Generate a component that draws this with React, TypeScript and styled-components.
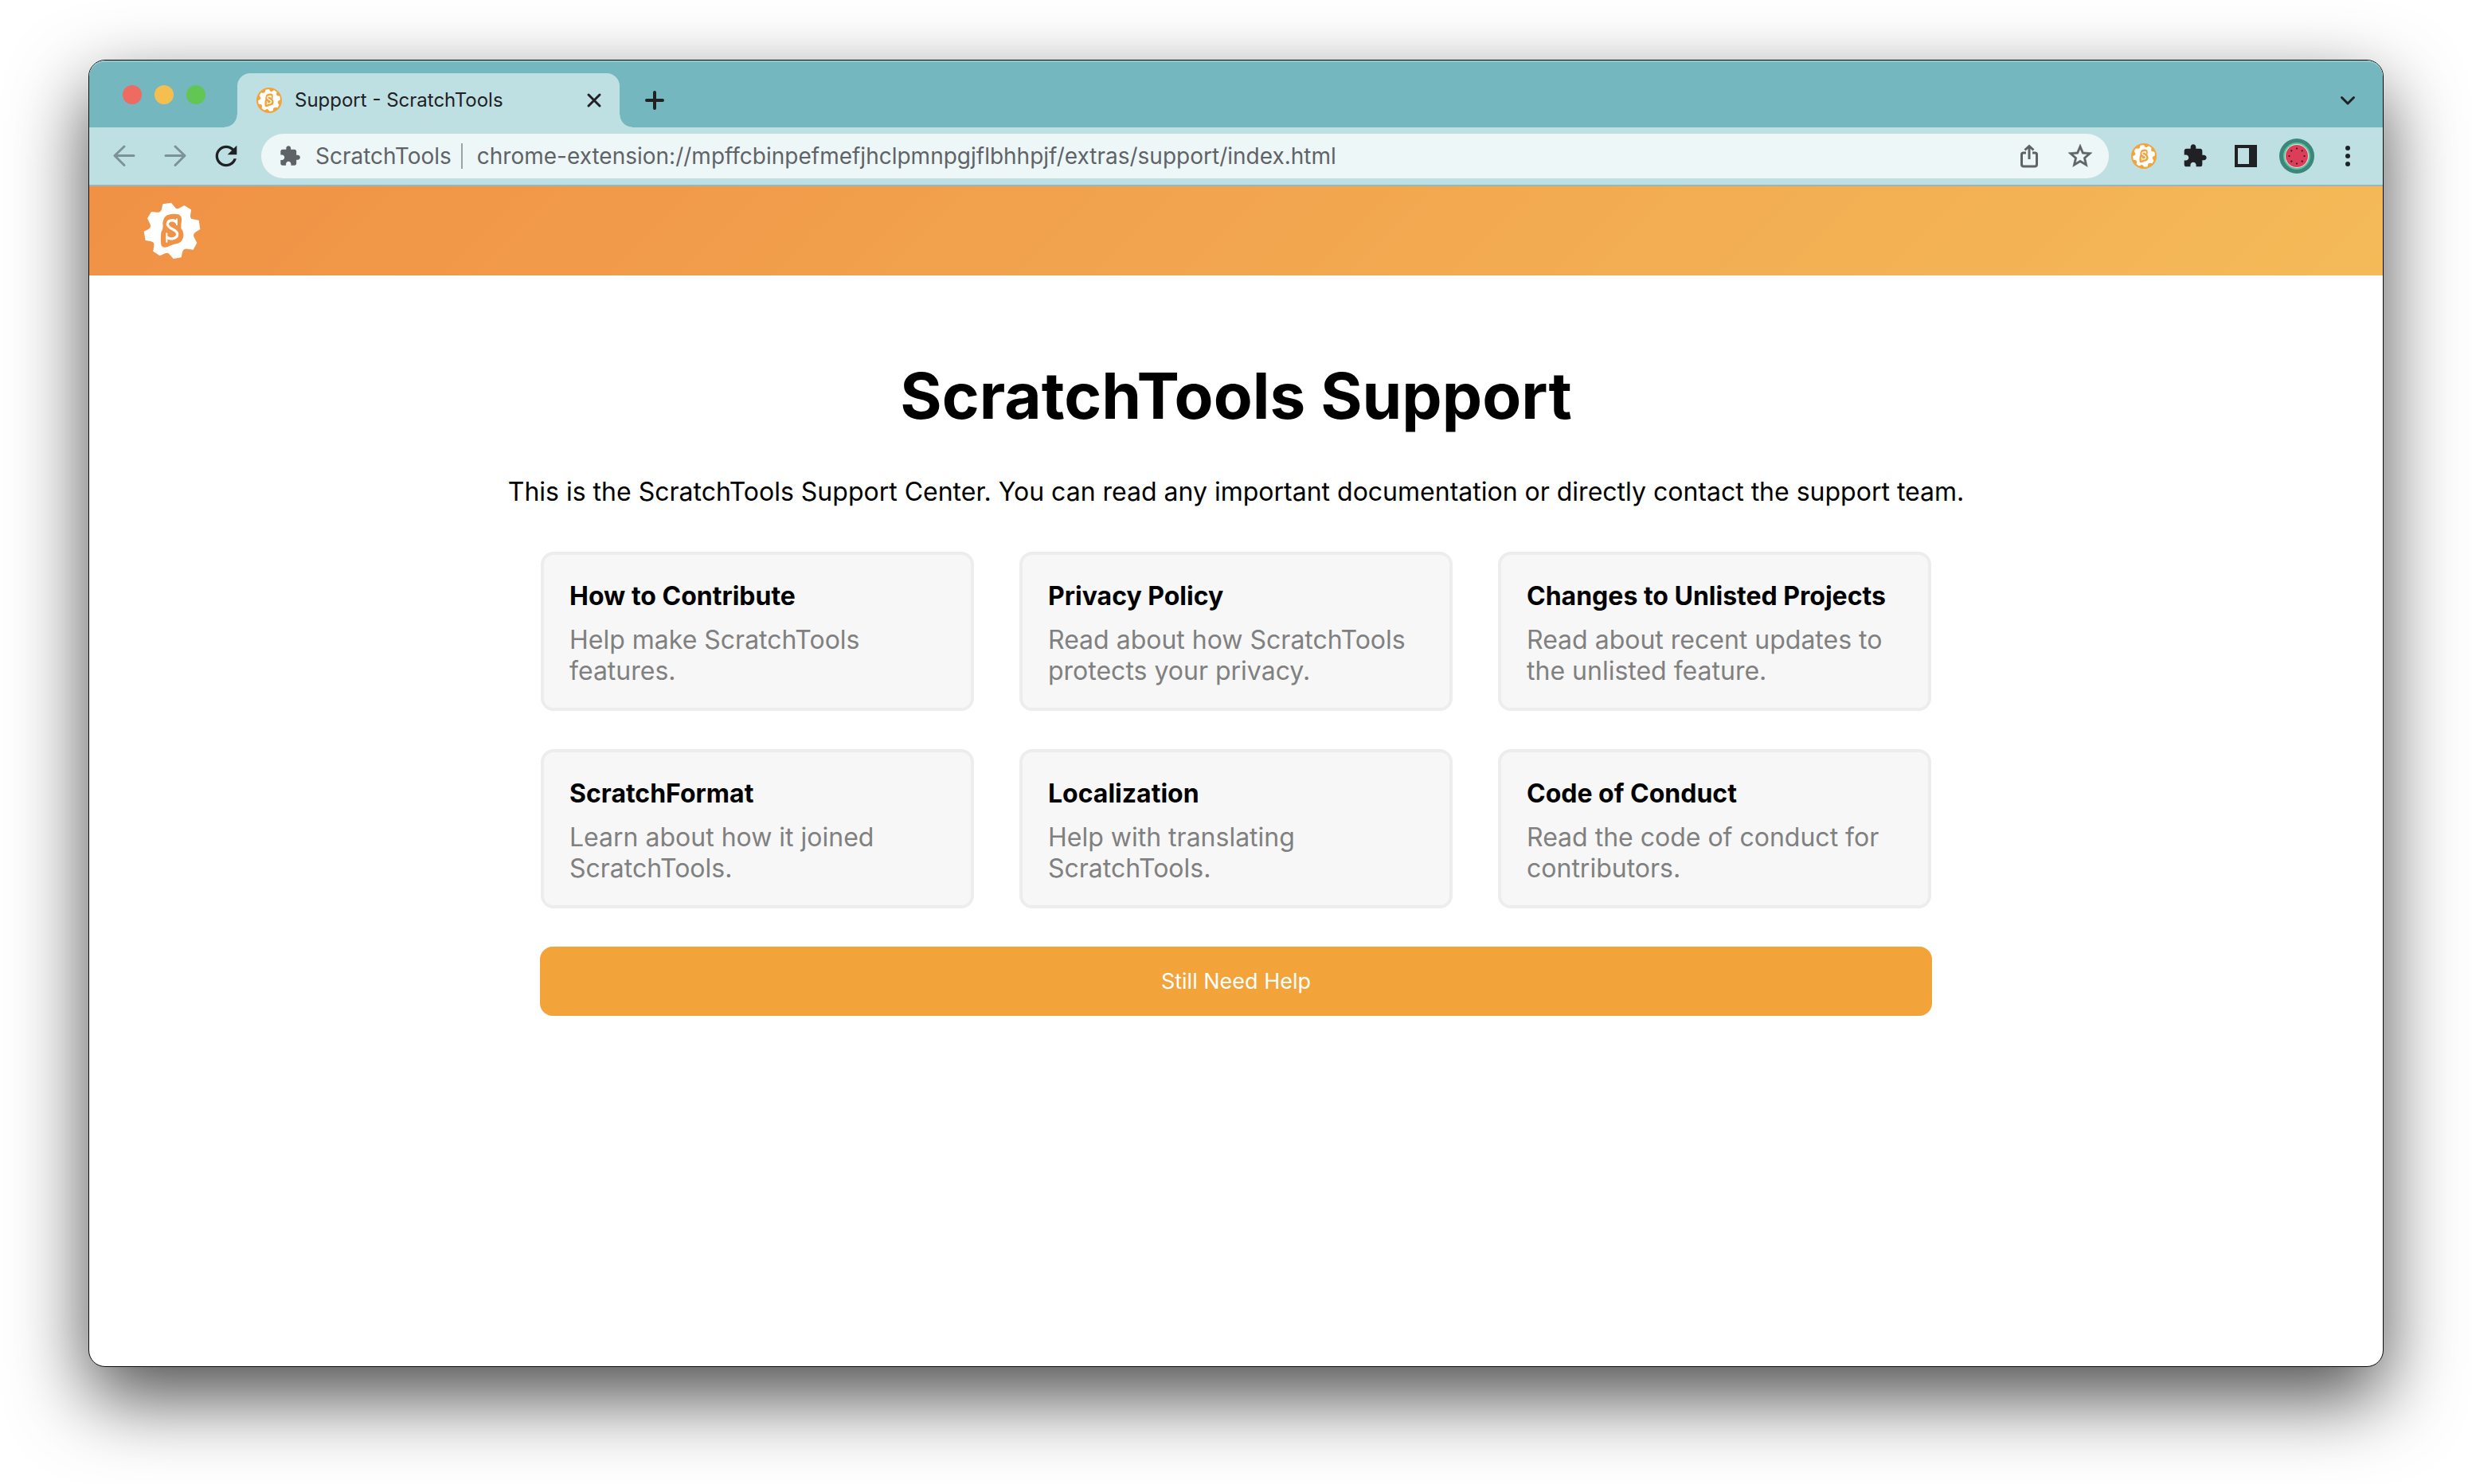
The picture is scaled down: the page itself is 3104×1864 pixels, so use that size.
import React from "react";
import styled, { createGlobalStyle } from "styled-components";

const INK = "#202124";
const MUTED = "#5f6368";
const TOOLBAR = "#bfe0e2";
const STRIP = "#74b7bf";
const ORANGE = "#f2a33a";

const GlobalStyle = createGlobalStyle`
  *, *::before, *::after { box-sizing: border-box; }
  body {
    margin: 0;
    background: #fff;
    color: #000;
    font-family: Inter, "Liberation Sans", sans-serif;
  }
  button, input { font: inherit; color: inherit; }
`;

const Desktop = styled.div`
  display: flex;
  min-height: 100vh;
  padding: 75px 111px 147px;
  overflow: hidden;
`;

const BrowserWindow = styled.div`
  flex: 1;
  min-width: 0;
  display: flex;
  flex-direction: column;
  border: 1px solid #0c0c0c;
  border-radius: 21px;
  background: #fff;
  box-shadow: 0 38px 96px rgba(0, 0, 0, 0.7);
`;

const TabStrip = styled.div`
  display: flex;
  align-items: center;
  height: 84px;
  padding: 0 28px 0 42px;
  border-top: 2px solid #8ec7cd;
  border-radius: 20px 20px 0 0;
  background: ${STRIP};
`;

const Lights = styled.div`
  display: flex;
  gap: 16px;
  margin-right: 40px;
`;

const Light = styled.button<{ $color: string }>`
  width: 24px;
  height: 24px;
  padding: 0;
  border: 0;
  border-radius: 50%;
  background: ${(p) => p.$color};
`;

const Tab = styled.div`
  position: relative;
  align-self: flex-end;
  display: flex;
  align-items: center;
  gap: 16px;
  width: 480px;
  height: 68px;
  padding: 0 20px 0 24px;
  border-radius: 16px 16px 0 0;
  background: ${TOOLBAR};
  color: ${INK};
  font-size: 24px;
  line-height: 32px;

  &::before,
  &::after {
    content: "";
    position: absolute;
    bottom: 0;
    width: 16px;
    height: 16px;
  }
  &::before {
    right: 100%;
    background: radial-gradient(circle at 0 0, transparent 15px, ${TOOLBAR} 16px);
  }
  &::after {
    left: 100%;
    background: radial-gradient(circle at 100% 0, transparent 15px, ${TOOLBAR} 16px);
  }
`;

const TabTitle = styled.span`
  flex: 1;
  white-space: nowrap;
`;

const IconButton = styled.button<{ $size?: number; $color?: string }>`
  flex: none;
  display: flex;
  align-items: center;
  justify-content: center;
  width: ${(p) => p.$size ?? 40}px;
  height: ${(p) => p.$size ?? 40}px;
  padding: 0;
  border: 0;
  background: none;
  color: ${(p) => p.$color ?? INK};

  svg { flex: none; }
`;

const StripActions = styled.div`
  flex: 1;
  align-self: flex-end;
  display: flex;
  align-items: center;
  justify-content: space-between;
  height: 68px;
  padding-left: 28px;
`;

const Toolbar = styled.div`
  display: flex;
  align-items: center;
  gap: 24px;
  height: 74px;
  padding: 0 24px;
  border-bottom: 2px solid #98b7bb;
  background: ${TOOLBAR};
`;

const Omnibox = styled.div`
  flex: 1;
  min-width: 0;
  display: flex;
  align-items: center;
  height: 56px;
  padding: 0 16px 0 22px;
  border-radius: 28px;
  background: #eef7f8;
  color: ${MUTED};
  font-size: 28px;
  line-height: 36px;
`;

const SiteName = styled.label`
  display: flex;
  align-items: center;
  gap: 18px;
  padding-right: 12px;
  white-space: nowrap;
`;

const Divider = styled.span`
  width: 2px;
  height: 32px;
  background: #9aa3a6;
`;

const Address = styled.input`
  flex: 1;
  min-width: 0;
  height: 36px;
  padding: 0 16px 0 18px;
  border: 0;
  outline: 0;
  background: none;
`;

const OmniboxActions = styled.div`
  display: flex;
  gap: 24px;
`;

const SiteHeader = styled.header`
  display: flex;
  align-items: center;
  height: 112px;
  padding: 0 68px;
  background: linear-gradient(135deg, #f09145, #f4ba58);
`;

const HomeLink = styled.a`
  display: flex;
`;

const Main = styled.main`
  display: flex;
  flex-direction: column;
  align-items: center;
  padding: 102px 64px 48px;
`;

const Title = styled.h1`
  margin: 0 0 52px;
  font-size: 80px;
  line-height: 98px;
  font-weight: 700;
  text-align: center;
`;

const Intro = styled.p`
  margin: 0 0 56px;
  font-size: 32px;
  line-height: 39px;
  text-align: center;
`;

const Topics = styled.div`
  width: 100%;
  max-width: 1748px;
`;

const CardGrid = styled.div`
  display: grid;
  grid-template-columns: repeat(3, 1fr);
  gap: 48px 57px;
  padding: 0 1px;
  margin-bottom: 48px;
`;

const Card = styled.a`
  display: flex;
  flex-direction: column;
  gap: 16px;
  padding: 32px 32px 27px;
  border: 4px solid #ededed;
  border-radius: 16px;
  background: #f7f7f7;
  color: #808080;
  font-size: 32px;
  line-height: 39px;
  text-decoration: none;
`;

const CardTitle = styled.strong`
  color: #000;
  font-weight: 700;
`;

const HelpButton = styled.button`
  width: 100%;
  height: 87px;
  border: 0;
  border-radius: 16px;
  background: ${ORANGE};
  color: #fff;
  font-size: 27px;
  line-height: 32px;
`;

const GEAR =
  "M133 49L165 44L180 62Q186 70 196 64L214 54L240 70L237 92Q236 104 247 106L269 110L274 144L258 154Q245 163 251 174L262 195L248 221L226 218Q212 215 207 230L203 250L173 255L160 240Q152 230 142 235L122 244L97 227L100 205Q102 193 90 190L68 186L62 152L80 143Q90 137 86 126L75 103L90 78L112 80Q125 82 129 68Z";

function Gear({ ink }: { ink: string }) {
  return (
    <>
      <path d={GEAR} fill="#fff" />
      <path
        d="M150 91Q172 84 191 88Q206 92 204 112Q201 128 202 140Q212 152 211 170Q207 192 190 197Q172 200 160 206Q140 218 128 206Q124 190 127 155Q136 142 133 122Q134 100 150 91Z"
        fill={ink}
      />
      <g fill="none" stroke="#fff" strokeLinecap="round">
        <path d="M184 118C179 107 152 107 151 124C150 143 188 143 188 162C188 182 158 183 149 174" strokeWidth="10" />
        <path d="M186 106V127M148 160V191" strokeWidth="6" />
      </g>
    </>
  );
}

function Logo() {
  return (
    <svg width="72" height="72" viewBox="60 42 216 216" aria-hidden="true">
      <Gear ink="#f09346" />
    </svg>
  );
}

function LogoBadge() {
  return (
    <svg width="32" height="32" viewBox="0 0 32 32" aria-hidden="true">
      <circle cx="16" cy="16" r="16" fill={ORANGE} />
      <g transform="translate(16 16) scale(0.132) translate(-168 -150)">
        <Gear ink={ORANGE} />
      </g>
    </svg>
  );
}

function Puzzle({ size }: { size: number }) {
  return (
    <svg width={size} height={size} viewBox="0 0 24 24" fill="currentColor" aria-hidden="true">
      <path d="M20.5 11H19V7c0-1.1-.9-2-2-2h-4V3.5C13 2.12 11.88 1 10.5 1S8 2.12 8 3.5V5H4c-1.1 0-1.99.9-1.99 2v3.8H3.5c1.49 0 2.7 1.21 2.7 2.7s-1.21 2.7-2.7 2.7H2V20c0 1.1.9 2 2 2h3.8v-1.5c0-1.49 1.21-2.7 2.7-2.7 1.49 0 2.7 1.21 2.7 2.7V22H17c1.1 0 2-.9 2-2v-4h1.5c1.38 0 2.5-1.12 2.5-2.5S21.88 11 20.5 11z" />
    </svg>
  );
}

function Arrow({ forward }: { forward?: boolean }) {
  return (
    <svg width="40" height="40" viewBox="0 0 40 40" fill="none" stroke="currentColor" strokeWidth="3" strokeLinecap="round" strokeLinejoin="round" aria-hidden="true">
      <path d={forward ? "M8 19.5H32M20 8L32 19.5L20 31.5" : "M32 19.5H8M20 8L8 19.5L20 31.5"} />
    </svg>
  );
}

function Reload() {
  return (
    <svg width="40" height="40" viewBox="0 0 24 24" fill="currentColor" aria-hidden="true">
      <path d="M17.65 6.35C16.2 4.9 14.21 4 12 4c-4.42 0-7.99 3.58-7.99 8s3.57 8 7.99 8c3.73 0 6.84-2.55 7.73-6h-2.08c-.82 2.33-3.04 4-5.65 4-3.31 0-6-2.69-6-6s2.69-6 6-6c1.66 0 3.14.69 4.22 1.78L13 11h7V4l-2.35 2.35z" />
    </svg>
  );
}

function Share() {
  return (
    <svg width="40" height="40" viewBox="0 0 40 40" fill="none" stroke="currentColor" strokeWidth="3" strokeLinejoin="round" aria-hidden="true">
      <path d="M16 16H12.5Q10.5 16 10.5 18V30.5Q10.5 33 13 33H27Q29.5 33 29.5 30.5V18Q29.5 16 27.5 16H24" />
      <path d="M20 24V8M14.5 12.5L20 7.5L25.5 12.5" strokeLinejoin="miter" />
    </svg>
  );
}

function Star() {
  return (
    <svg width="36" height="36" viewBox="0 0 24 24" fill="currentColor" stroke="currentColor" strokeWidth="0.3" aria-hidden="true">
      <path d="M22 9.24l-7.19-.62L12 2 9.19 8.63 2 9.24l5.46 4.73L5.82 21 12 17.27 18.18 21l-1.63-7.03L22 9.24zM12 15.4l-3.76 2.27 1-4.28-3.32-2.88 4.38-.38L12 6.1l1.71 4.04 4.38.38-3.32 2.88 1 4.28L12 15.4z" />
    </svg>
  );
}

function SidePanel() {
  return (
    <svg width="28" height="28" viewBox="0 0 28 28" fill="currentColor" aria-hidden="true">
      <path fillRule="evenodd" d="M0 0H28V28H0ZM4 4V24H18V4Z" />
    </svg>
  );
}

function Watermelon() {
  const seeds = Array.from({ length: 8 }, (_, i) => (i * Math.PI) / 4);
  return (
    <svg width="44" height="44" viewBox="-22 -22 44 44" aria-hidden="true">
      <circle r="22" fill="#3c877a" />
      <circle r="17" fill="#58c3a4" />
      <circle r="15" fill="#f3dcd6" />
      <circle r="14" fill="#dc3d59" />
      {seeds.map((a) => (
        <circle key={a} cx={Math.cos(a) * 9.5} cy={Math.sin(a) * 9.5} r="1.1" fill="#2c1a22" />
      ))}
    </svg>
  );
}

function Menu() {
  return (
    <svg width="8" height="28" viewBox="0 0 8 28" fill="currentColor" aria-hidden="true">
      <circle cx="4" cy="4" r="3" />
      <circle cx="4" cy="14" r="3" />
      <circle cx="4" cy="24" r="3" />
    </svg>
  );
}

function Stroke({ size, d, width }: { size: number; d: string; width: number }) {
  return (
    <svg width={size} height={size} viewBox={`0 0 ${size} ${size}`} fill="none" stroke="currentColor" strokeWidth={width} strokeLinecap="round" strokeLinejoin="round" aria-hidden="true">
      <path d={d} />
    </svg>
  );
}

const topics = [
  { title: "How to Contribute", text: "Help make ScratchTools features." },
  { title: "Privacy Policy", text: "Read about how ScratchTools protects your privacy." },
  { title: "Changes to Unlisted Projects", text: "Read about recent updates to the unlisted feature." },
  { title: "ScratchFormat", text: "Learn about how it joined ScratchTools." },
  { title: "Localization", text: "Help with translating ScratchTools." },
  { title: "Code of Conduct", text: "Read the code of conduct for contributors." },
];

export default function App() {
  return (
    <>
      <GlobalStyle />
      <Desktop>
        <BrowserWindow>
          <TabStrip>
            <Lights>
              <Light $color="#ed6b60" aria-label="Close window" />
              <Light $color="#f5bf4f" aria-label="Minimize window" />
              <Light $color="#62c655" aria-label="Zoom window" />
            </Lights>
            <Tab>
              <LogoBadge />
              <TabTitle>Support - ScratchTools</TabTitle>
              <IconButton $size={24} aria-label="Close tab">
                <Stroke size={24} d="M5 5L19 19M19 5L5 19" width={3} />
              </IconButton>
            </Tab>
            <StripActions>
              <IconButton $size={32} aria-label="New tab">
                <Stroke size={32} d="M16 6V26M6 16H26" width={4} />
              </IconButton>
              <IconButton $size={32} aria-label="Search tabs">
                <Stroke size={32} d="M8.5 12.5L16 20L23.5 12.5" width={3} />
              </IconButton>
            </StripActions>
          </TabStrip>
          <Toolbar>
            <IconButton $color="#7c9296" aria-label="Back">
              <Arrow />
            </IconButton>
            <IconButton $color="#7c9296" aria-label="Forward">
              <Arrow forward />
            </IconButton>
            <IconButton aria-label="Reload">
              <Reload />
            </IconButton>
            <Omnibox>
              <SiteName htmlFor="address">
                <Puzzle size={28} />
                ScratchTools
              </SiteName>
              <Divider />
              <Address
                id="address"
                type="text"
                defaultValue="chrome-extension://mpffcbinpefmefjhclpmnpgjflbhhpjf/extras/support/index.html"
              />
              <OmniboxActions>
                <IconButton $color={MUTED} aria-label="Share">
                  <Share />
                </IconButton>
                <IconButton $color={MUTED} aria-label="Bookmark">
                  <Star />
                </IconButton>
              </OmniboxActions>
            </Omnibox>
            <IconButton aria-label="ScratchTools extension">
              <LogoBadge />
            </IconButton>
            <IconButton aria-label="Extensions">
              <Puzzle size={32} />
            </IconButton>
            <IconButton aria-label="Side panel">
              <SidePanel />
            </IconButton>
            <IconButton aria-label="Profile">
              <Watermelon />
            </IconButton>
            <IconButton aria-label="Menu">
              <Menu />
            </IconButton>
          </Toolbar>
          <SiteHeader>
            <HomeLink href="#" aria-label="ScratchTools">
              <Logo />
            </HomeLink>
          </SiteHeader>
          <Main>
            <Title>ScratchTools Support</Title>
            <Intro>
              This is the ScratchTools Support Center. You can read any important documentation or
              directly contact the support team.
            </Intro>
            <Topics>
              <CardGrid>
                {topics.map((t) => (
                  <Card key={t.title} href="#">
                    <CardTitle>{t.title}</CardTitle>
                    <span>{t.text}</span>
                  </Card>
                ))}
              </CardGrid>
              <HelpButton type="button">Still Need Help</HelpButton>
            </Topics>
          </Main>
        </BrowserWindow>
      </Desktop>
    </>
  );
}
